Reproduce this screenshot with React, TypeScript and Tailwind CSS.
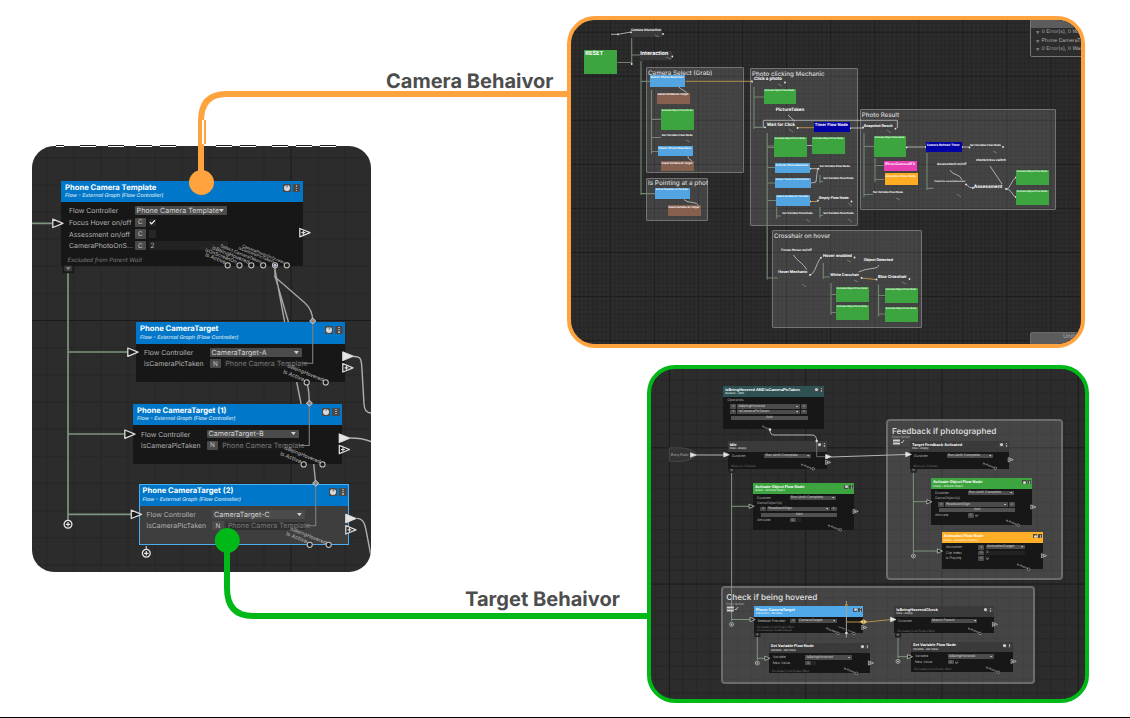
import type { ReactNode } from 'react';
import clsx from 'clsx';
import { Check } from 'lucide-react';

const ctx = document.createElement('canvas').getContext('2d')!;

// Font size at which `text` is exactly `width` wide.
function fitSize(text: string, width: number, weight: number) {
  ctx.font = `${weight} 100px Inter`;
  return (width / ctx.measureText(text).width) * 100;
}

type LabelProps = {
  x: number;
  cy: number;
  w: number;
  text: string;
  weight?: number;
  className?: string;
  angle?: number;
};

function Label({ x, cy, w, text, weight = 700, className = 'text-white', angle = 0 }: LabelProps) {
  return (
    <span
      className={clsx('absolute h-0 origin-left whitespace-nowrap leading-none', className)}
      style={{
        left: x,
        top: cy,
        lineHeight: 0,
        fontWeight: weight,
        fontSize: fitSize(text, w, weight),
        transform: angle ? `rotate(${angle}deg)` : undefined,
      }}
    >
      {text}
    </span>
  );
}

// Slanted caption that ends next to a bottom port.
function PortLabel({ x, y, w, text, className = 'text-[#a8a8a8]' }: { x: number; y: number; w: number; text: string; className?: string }) {
  return <Label x={x - w * 0.927} cy={y - w * 0.375} w={w} text={text} weight={500} angle={22} className={className} />;
}

type CanvasProps = {
  x: number;
  y: number;
  className: string;
  step: number;
  originX: number;
  originY: number;
  every: number;
  minor: string;
  major: string;
  children: ReactNode;
};

// Node canvas: children are placed in board coordinates, (x, y) is its top left corner.
function Canvas({ x, y, className, step, originX, originY, every, minor, major, children }: CanvasProps) {
  const lines = (from: number, size: number, origin: number) => {
    const first = Math.ceil((from - origin) / step);
    const out: { at: number; major: boolean }[] = [];
    for (let i = first; origin + i * step < from + size; i++) {
      out.push({ at: origin + i * step - from, major: i % every === 0 });
    }
    return out;
  };
  return (
    <section className={clsx('relative shrink-0 overflow-hidden bg-[#2c2c2c]', className)}>
      <svg className="absolute inset-0 size-full">
        {lines(x, 520, originX).map((l) => (
          <line key={l.at} x1={l.at} x2={l.at} y1={0} y2={430} stroke={l.major ? major : minor} />
        ))}
        {lines(y, 430, originY).map((l) => (
          <line key={l.at} y1={l.at} y2={l.at} x1={0} x2={520} stroke={l.major ? major : minor} />
        ))}
      </svg>
      <div className="absolute h-[718px] w-[1130px]" style={{ left: -x, top: -y }}>
        {children}
      </div>
    </section>
  );
}

function Wires({ children }: { children: ReactNode }) {
  return (
    <svg className="absolute inset-0" width="1130" height="718" fill="none">
      {children}
    </svg>
  );
}

type PortProps = { x: number; y: number; s?: number; kind?: 'in' | 'out' | 'plus' };

function Port({ x, y, s = 1, kind = 'in' }: PortProps) {
  return (
    <g transform={`translate(${x} ${y}) scale(${s})`}>
      <path
        d="M.8 -4.2 L11 0 L.8 4.2 Z"
        fill={kind === 'out' ? '#e6e6e6' : '#1c1c1c'}
        stroke="#dcdcdc"
        strokeWidth="1.3"
        strokeLinejoin="round"
      />
      {kind === 'plus' && <path d="M2.4 0H6.4M4.4 -2V2" stroke="#dcdcdc" strokeWidth="1.2" />}
    </g>
  );
}

function Ring({ x, y, r = 2.6 }: { x: number; y: number; r?: number }) {
  return <circle cx={x} cy={y} r={r} fill="#1c1c1c" stroke="#c4c4c4" strokeWidth={r * 0.4} />;
}

function AddPort({ x, y, s = 1 }: { x: number; y: number; s?: number }) {
  return (
    <g transform={`translate(${x} ${y}) scale(${s})`} stroke="#e6e6e6">
      <circle r="3.9" fill="#222" strokeWidth="1.3" />
      <path d="M-2.2 0H2.2M0 -2.2V2.2" strokeWidth="1.2" />
    </g>
  );
}

function Diamond({ x, y }: { x: number; y: number }) {
  return <path d={`M${x - 3} ${y}l3 -3l3 3l-3 3z`} fill="#8a8a8a" stroke="#d0d0d0" />;
}

function Tab({ x, y, s = 1 }: { x: number; y: number; s?: number }) {
  return (
    <g transform={`translate(${x} ${y}) scale(${s})`}>
      <rect x="-6" y="-4" width="12" height="8" rx="1" fill="#1a1a1a" />
      <rect x="-4" y="-3.6" width="8" height="5.6" fill="#3a3a3a" />
      <path d="M-2.4 -2.4H2.4L0 1.2Z" fill="#808080" />
    </g>
  );
}

type Row =
  | { kind: 'select'; label: string; tag?: string; value: string }
  | { kind: 'check'; label: string; on: boolean }
  | { kind: 'value'; label: string; tag: string; value: string; dim?: boolean }
  | { kind: 'item'; value: string }
  | { kind: 'text'; label: string }
  | { kind: 'add' };

function Tag({ children }: { children: string }) {
  return (
    <span className="flex h-[1.15em] w-[1.45em] shrink-0 items-center justify-center rounded-[0.1em] bg-[#4b4b4b] text-[#c8c8c8]">
      <span className="text-[0.8em]">{children}</span>
    </span>
  );
}

function Dropdown({ value, className }: { value: string; className: string }) {
  return (
    <span className={clsx('flex h-[1.1em] items-center justify-between rounded-[0.1em] bg-[#4b4b4b] pr-[0.4em] pl-[0.25em] text-[#d4d4d4]', className)}>
      <span className="text-[0.89em] leading-none">{value}</span>
      <svg viewBox="0 0 6 4" className="w-[0.6em] shrink-0">
        <path d="M0 0h6L3 4z" fill="#d0d0d0" />
      </svg>
    </span>
  );
}

function RowView({ row }: { row: Row }) {
  if (row.kind === 'add') {
    return (
      <div className="ml-[0.9em] flex h-[1em] w-[19.2em] items-center justify-center bg-[#505050] text-[#cfcfcf]">
        <span className="text-[0.85em]">Add</span>
      </div>
    );
  }
  if (row.kind === 'item') {
    return (
      <div className="ml-[0.8em] flex items-center gap-[0.3em]">
        <Tag>V</Tag>
        <Dropdown value={row.value} className="w-[15.6em]" />
        <Tag>X</Tag>
      </div>
    );
  }
  if (row.kind === 'text') return <span className="text-[0.88em]">{row.label}</span>;
  return (
    <>
      <span className="w-[8.2em] shrink-0 text-[#b4b4b4]">
        <span className="text-[0.86em]">{row.label}</span>
      </span>
      {row.kind === 'select' && (
        <>
          {row.tag && (
            <span className="mr-[0.4em]">
              <Tag>{row.tag}</Tag>
            </span>
          )}
          <Dropdown value={row.value} className={row.tag ? 'w-[9.8em]' : 'w-[11.6em]'} />
        </>
      )}
      {row.kind === 'check' && (
        <>
          <Tag>C</Tag>
          <span className="ml-[0.3em] flex size-[0.95em] items-center justify-center rounded-[0.1em] bg-[#262626]">
            {row.on && <Check className="size-[0.85em] text-white" strokeWidth={4} />}
          </span>
        </>
      )}
      {row.kind === 'value' && (
        <>
          <Tag>{row.tag}</Tag>
          <span className={clsx('ml-[0.3em] flex h-[1.1em] w-[9.9em] items-center pl-[0.2em]', row.dim ? 'bg-[#202020]/50 text-[#767676]' : 'bg-[#222] text-[#b4b4b4]')}>
            <span className="whitespace-nowrap text-[0.89em]">{row.value}</span>
          </span>
        </>
      )}
    </>
  );
}

type NodeProps = {
  x: number;
  y: number;
  w: number;
  h: number;
  title: string;
  sub: string;
  header: string;
  rows: Row[];
  footer?: string;
  small?: boolean;
  selected?: boolean;
};

function FlowNode({ x, y, w, h, title, sub, header, rows, footer, small, selected }: NodeProps) {
  return (
    <div
      className={clsx(
        'absolute flex flex-col leading-none',
        small ? 'text-[4px]' : 'text-[8px]',
        selected ? 'bg-[#3e3e3e] outline-[1.5px] outline-[#4aaef0] -outline-offset-1' : 'bg-[#171717]',
      )}
      style={{ left: x, top: y, width: w, height: h }}
    >
      <header className={clsx('flex h-[2.7em] shrink-0 items-start justify-between pt-[0.42em] pr-[0.3em] pl-[0.5em]', header)}>
        <div className="flex flex-col whitespace-nowrap text-white">
          <span className="h-[1.2em] text-[0.96em] leading-[1.15em] font-bold">{title}</span>
          <span className="text-[0.66em] leading-[1.3em] font-medium text-white/80 italic">{sub}</span>
        </div>
        <div className="flex gap-[0.25em] pt-[0.05em]">
          <span className="flex h-[1em] w-[1.05em] items-center justify-center rounded-[0.1em] bg-[#4a4a4a]">
            <span className="flex size-[0.75em] items-center justify-center rounded-full bg-[#dadada]">
              <span className="text-[0.55em] font-bold text-[#444]">?</span>
            </span>
          </span>
          <span className="flex h-[1em] w-[0.9em] flex-col items-center justify-center gap-[0.1em] rounded-[0.1em] bg-[#4a4a4a]">
            <i className="size-[0.17em] bg-[#a8a8a8]" />
            <i className="size-[0.17em] bg-[#a8a8a8]" />
            <i className="size-[0.17em] bg-[#a8a8a8]" />
          </span>
        </div>
      </header>
      <div className="flex flex-col pt-[0.35em] pl-[1em]">
        {rows.map((row, i) => (
          <div key={i} className={clsx('flex items-center whitespace-nowrap text-[#a8a8a8]', small ? 'h-[1.39em]' : 'h-[1.46em]')}>
            <RowView row={row} />
          </div>
        ))}
      </div>
      {footer && (
        <div className="mt-auto pb-[0.2em] pl-[0.8em] text-[#7a7a7a]">
          <p className="text-[0.74em] leading-[1em] whitespace-pre-line italic">{footer}</p>
        </div>
      )}
    </div>
  );
}

const extSub = 'Flow - External Graph (Flow Controller)';

function targetRows(value: string): Row[] {
  return [
    { kind: 'select', label: 'Flow Controller', value },
    { kind: 'value', label: 'isCameraPicTaken', tag: 'N', value: 'Phone Camera Template', dim: true },
  ];
}

function OverviewCanvas() {
  return (
    <Canvas x={32} y={146} step={27.15} originX={291} originY={320.5} every={10} minor="#272727" major="#1a1a1a" className="mt-[146px] ml-8 h-[426px] w-[339px] rounded-[22px]">
      <FlowNode
        x={61} y={180.5} w={241.5} h={85}
        title="Phone Camera Template" sub={extSub} header="bg-[#0077c8]"
        footer="Excluded from Parent Wait"
        rows={[
          { kind: 'select', label: 'Flow Controller', value: 'Phone Camera Template' },
          { kind: 'check', label: 'Focus Hover on/off', on: true },
          { kind: 'check', label: 'Assessment on/off', on: false },
          { kind: 'value', label: 'CameraPhotoOnS...', tag: 'C', value: '2' },
        ]}
      />
      <Wires>
        <g stroke="#a6a6a6" strokeWidth="1.4">
          <path d="M275 267V277L305 303Q312.7 310 312.7 321" />
          <path d="M275 270L285 324M275 276L289 324M296.7 382L301.3 405M306.7 382Q309.3 390 309.3 404M313.7 464L315.7 484" />
        </g>
      </Wires>
      <FlowNode x={136} y={322} w={209} h={60.3} title="Phone CameraTarget" sub={extSub} header="bg-[#0077c8]" rows={targetRows('CameraTarget-A')} />
      <FlowNode x={133} y={403.8} w={209} h={60.3} title="Phone CameraTarget (1)" sub={extSub} header="bg-[#0077c8]" rows={targetRows('CameraTarget-B')} />
      <FlowNode x={138.5} y={484} w={210.5} h={61.3} title="Phone CameraTarget (2)" sub={extSub} header="bg-[#0077c8]" rows={targetRows('CameraTarget-C')} selected />
      <PortLabel x={225} y={263} w={22} text="Is Active" />
      <PortLabel x={237} y={263} w={34} text="isOnScreenOn" />
      <PortLabel x={249} y={263} w={40} text="isBeingHovered" />
      <PortLabel x={261} y={263} w={44} text="Select CameraTaken" />
      <PortLabel x={273} y={263} w={38} text="isCameraPicTaken" />
      <PortLabel x={285} y={263.5} w={46} text="CameraPhotoOnScreen" />
      {[[0, 0], [-3, 82], [3, 162.4]].map(([dx, dy]) => (
        <div key={dy}>
          <PortLabel x={304 + dx} y={380.5 + dy} w={22.5} text="Is Active" />
          <PortLabel x={323 + dx} y={381 + dy} w={39} text="isBeingHovered" />
        </div>
      ))}
      <Wires>
        <g stroke="#7d957d" strokeWidth="1.7">
          <path d="M68 273V520M68 352H128M68 434H125M68 514.3H131M32 223.3H53" />
        </g>
        <g stroke="#808080" strokeWidth="1.1">
          <path d="M312.7 321V363.3H302.5M309.3 403V445.5H299M315.7 483V525.8H305.5" />
        </g>
        <g stroke="#b0b0b0" strokeWidth="1.4">
          <path d="M353 356.6C361 356 361.5 359 362 370L364 404Q364.5 413 371 413M350 438Q362 438 371 441.5M357 518.4Q364 518 366 530L371 556M146.3 546V550" />
        </g>
        <Tab x={68.3} y={269.3} />
        <Port x={52} y={223.3} />
        <Port x={127} y={352.2} />
        <Port x={124} y={434.2} />
        <Port x={130.5} y={514.3} />
        <Port x={299} y={232.7} kind="plus" />
        <Port x={342} y={356.2} kind="out" />
        <Port x={342} y={367.8} kind="plus" />
        <Port x={338.5} y={438.2} kind="out" />
        <Port x={338.5} y={449.5} kind="plus" />
        <Port x={345} y={518.5} kind="out" />
        <Port x={345} y={529.8} kind="plus" />
        {[227.7, 239.5, 251.3, 263.2, 275, 286.8].map((x) => (
          <Ring key={x} x={x} y={265.3} />
        ))}
        <circle cx="275" cy="265.3" r="1.6" fill="#c9c4dc" />
        <Ring x={306.7} y={382.4} />
        <Ring x={325.7} y={382.4} />
        <Ring x={303.7} y={464.4} />
        <Ring x={322.5} y={464.4} />
        <Ring x={309.7} y={544.8} />
        <Ring x={328.7} y={544.8} />
        <Diamond x={312.7} y={321} />
        <Diamond x={309.4} y={403.2} />
        <Diamond x={315.7} y={483.2} />
        <AddPort x={68} y={524.3} />
        <AddPort x={146.3} y={553.3} />
      </Wires>
    </Canvas>
  );
}

function Group({ x, y, w, h, className }: { x: number; y: number; w: number; h: number; className: string }) {
  return <div className={clsx('absolute bg-white/12', className)} style={{ left: x, top: y, width: w, height: h }} />;
}

const GREEN = 'bg-[#3da53f]';
const BLUE = 'bg-[#52a5e0]';
const BROWN = 'bg-[#85604f]';
const NAVY = 'bg-[#0000a4]';

// x, y, width, height, colour, caption
const blocks: [number, number, number, number, string, string][] = [
  [584.3, 50, 33, 24.3, GREEN, ''],
  [649.7, 74.7, 35.7, 12.5, BLUE, 'Select: Phone BaseItem'],
  [657, 93, 33, 11, BROWN, 'Reset Variable on Target'],
  [661, 109.3, 33.3, 20.7, GREEN, 'Activate Object Flow Node'],
  [657.7, 146, 35.3, 10, BLUE, 'Hover: Phone BaseItem'],
  [661, 160.7, 33.3, 10.5, BROWN, 'Reset Variable on Target'],
  [655, 188, 34.7, 11, BLUE, 'Active Crosshair on The Side'],
  [667.7, 205.3, 33.3, 10.7, BROWN, 'Reset Variable on Target'],
  [763.7, 89, 32.3, 15, GREEN, 'Activate Object Flow Node'],
  [774, 136.7, 33, 20.7, GREEN, 'Activate Object Flow Node'],
  [812, 136.7, 33, 17.5, GREEN, 'Activate Object Flow Node'],
  [774.7, 163, 35.3, 10, BLUE, 'Activate: Phone BaseItem'],
  [775.3, 178, 35.3, 10, BLUE, 'Hover: Touch to Click Photo'],
  [776, 195.3, 34, 10.7, BLUE, 'Select Variable for The Side'],
  [814, 122, 35.7, 10, NAVY, 'Timer Flow Node'],
  [874, 136, 32.3, 21, GREEN, 'Activate Object Flow Node'],
  [884, 161, 33, 9.7, 'bg-[#e83fb4]', 'iPhoneCameraSFX'],
  [884.7, 173.3, 33, 11.7, 'bg-[#ffac22]', 'Animation Flow Node'],
  [926, 142, 35.7, 10, NAVY, 'Camera Refresh Timer'],
  [1016, 170, 33, 15, GREEN, 'Activate Object Flow Node'],
  [1016, 190, 33, 15, GREEN, 'Activate Object Flow Node'],
  [836, 287.3, 33, 14.8, GREEN, 'Activate Object Flow Node'],
  [836, 305.3, 33, 14.8, GREEN, 'Activate Object Flow Node'],
  [885, 288, 33, 15, GREEN, 'Activate Object Flow Node'],
  [885, 307, 33, 15, GREEN, 'Activate Object Flow Node'],
];

// x, vertical centre, width, caption
const captions: [number, number, number, string][] = [
  [585.3, 53.7, 18, 'RESET'],
  [631, 30.3, 30, 'Camera Interaction'],
  [640.3, 54, 28, 'Interaction'],
  [661.7, 134.5, 31, 'Set Variable Flow Node'],
  [754, 80.2, 28, 'Click a photo'],
  [775.7, 111.2, 28.7, 'PictureTaken'],
  [766.7, 126, 28.5, 'Wait for Click'],
  [819.5, 165.8, 30.5, 'Set Variable Flow Node'],
  [823.3, 178.3, 30.5, 'Set Variable Flow Node'],
  [819, 198, 29.7, 'Empty Flow Node'],
  [782.3, 213.3, 30.5, 'Set Variable Flow Node'],
  [823.3, 213.2, 30.5, 'Set Variable Flow Node'],
  [863.7, 125.5, 29, 'Snapshot Result'],
  [873, 192, 30, 'Set Variable Flow Node'],
  [970, 145, 31, 'Set Variable Flow Node'],
  [937, 164.3, 29.7, 'Assessment on/off'],
  [976, 160.4, 30, 'check/cross switch'],
  [934.3, 181.7, 31, 'Check for correct/incorrect'],
  [973.7, 187, 28.7, 'Assessment'],
  [781.3, 250, 30.7, 'Focus Hover on/off'],
  [778.3, 272.4, 29.3, 'Hover Mechanic'],
  [823, 256, 29, 'Hover enabled'],
  [863.7, 259.6, 29.3, 'Object Detected'],
  [830.3, 275.4, 28.8, 'White Crosshair'],
  [878, 277.2, 28.8, 'Blue Crosshair'],
];

function CameraCanvas() {
  return (
    <Canvas x={571} y={20} step={4.405} originX={610.4} originY={32.2} every={10} minor="#272727" major="#1c1c1c" className="h-[332px] w-[518px] rounded-[28px] border-4 border-[#ffa33f]">
      <Group x={646} y={67.3} w={97.7} h={105.3} className="rounded-[1px] border border-[#747474]" />
      <Group x={645.7} y={177.5} w={62.7} h={43.8} className="rounded-[1px] border border-[#747474]" />
      <Group x={750.3} y={68.3} w={107.4} h={157.5} className="rounded-[1px] border border-[#747474]" />
      <Group x={859.7} y={109} w={196} h={101} className="rounded-[1px] border border-[#747474]" />
      <Group x={772} y={230} w={149.7} h={97.7} className="rounded-[1px] border border-[#747474]" />
      <div className="absolute top-[28px] left-[631px] h-[9px] w-[31px] bg-[#3a3a3a]" />
      <div className="absolute top-[51px] left-[640px] h-[9px] w-[32px] bg-[#3a3a3a]" />
      <Wires>
        <g stroke="#71846f" strokeWidth="1.2">
          <path d="M631.7 38V64M617.5 62.5H632M632 55H640M641 61V195M641 81.3H650M641 193.7H655" />
          <path d="M651.5 90V154M651.5 119.3H661M651.5 137.5H661M651.5 151.5H658" />
          <path d="M754 87V129M754 97H764M754 127.3H765M767.2 133V279.5M767.2 146H774M767.2 147.5H774M767.2 167.5H775M767.2 183H775M767.2 200.5H776M767.2 278H778" />
          <path d="M776.7 207V218.5M776.7 216H781M820 175V183M820 181.5H823M820 207V218M820 215.5H823" />
          <path d="M864 133V197M864 146.5H874M864 194.5H873M875 158V182M875 165.5H884M875 179.5H884" />
          <path d="M927 153V190M927 188.3H933.5M823.3 263V279M823.3 277H830M831 283V315M831 294.5H836M831 312.5H836M878.5 284.5V316.5M878.5 295.5H885M878.5 314H885" />
        </g>
        <g stroke="#c9c9c9" strokeWidth="0.8">
          <path d="M611 34.3H618L631 32M679 87Q680 89 683 90T687 94M688 156Q688 159 690 159.5T692 162M684 199.5Q686 202 692 202.5T698 205" />
          <path d="M763.3 127V120.3H897.3V128M788 115L795 121.5M807 145.5H812M849.7 128H863.5M906.5 147H926M961.7 147H970M810 168.7H819M811 183L816 182L817.5 169" />
          <path d="M950 170Q951 173 956 174.5T962 180M990 166L1002 184M966 184Q969 188 973 188M1006 189Q1009 189 1011 184T1016 177.5M1006 189Q1010 189 1012 193T1016 197" />
          <path d="M793.5 255Q796 259 800 262T806.7 269.5M810 274.5Q813 275 816 267T821 258M878.5 265Q879 268 872 268.5T858.5 272" />
        </g>
        <g stroke="#b0904c" strokeWidth="1">
          <path d="M685.5 81.3H752M797 127.7H814M810 201.5H818M861 278L876 279.5" />
        </g>
        <g stroke="#9a9a9a" strokeWidth="0.6">
          <path d="M655 35L659 37M666 57L671 59M609 72L613 74M686 127L690 129M686 140L690 142M778 84L782 86M786 101L790 103M789 129L793 132M829 152L833 154M887 130L891 133M897 155L901 157M993 151L997 153M957 194L961 197M896 198L900 200M1042 183L1046 185M1042 202L1046 204M802 284L806 287M847 260L851 262M854 280L858 282M902 282L906 284M860 318L864 320M908 320L912 322M806 219L810 222M848 219L852 222M848 203L852 206" />
        </g>
        <g fill="#e8e8e8">
          {[[618, 34.3], [631, 32.3], [663, 34], [672.3, 56.5], [752, 81.5], [785, 82.5], [765, 127.3], [797.5, 128], [850, 128.3], [863, 127.5], [895.5, 128.7], [961.8, 147], [969.5, 147.5], [1003, 147], [966, 184.5], [973, 188], [1006, 189], [1016, 177.5], [1016, 197], [906.7, 147.3], [926, 147], [810, 275], [821, 257.7], [854.5, 257.5], [861.5, 278], [876.5, 279.5], [909.5, 279], [818.5, 168.7], [810, 168.7], [818, 200.5], [810, 201.5], [851.5, 201.5], [631.7, 64]].map(([x, y]) => (
            <circle key={`${x}-${y}`} cx={x} cy={y} r="0.9" />
          ))}
        </g>
      </Wires>
      {blocks.map(([x, y, w, h, color]) => (
        <div key={`${x}-${y}`} className={clsx('absolute', color)} style={{ left: x, top: y, width: w, height: h }} />
      ))}
      {blocks.map(([x, y, w, , , text]) => text && <Label key={`${x}-${y}`} x={x + 0.8} cy={y + (text.length < 21 ? 2.8 : 2)} w={w - 2.5} text={text} />)}
      {captions.map(([x, cy, w, text]) => (
        <Label key={`${x}-${cy}`} x={x} cy={cy} w={w} text={text} />
      ))}
      <Label x={648} cy={73} w={64.5} text="Camera Select (Grab)" weight={500} className="text-[#d8d8d8]" />
      <div className="absolute top-[177px] left-[647px] h-3 w-[61px] overflow-hidden">
        <Label x={1} cy={6} w={64} text="Is Pointing at a photo" weight={500} className="text-[#d8d8d8]" />
      </div>
      <Label x={752} cy={74.3} w={72.7} text="Photo clicking Mechanic" weight={500} className="text-[#d8d8d8]" />
      <Label x={861.7} cy={114.7} w={37.5} text="Photo Result" weight={500} className="text-[#d8d8d8]" />
      <Label x={774} cy={235.9} w={56.3} text="Crosshair on hover" weight={500} className="text-[#d8d8d8]" />
      <div className="absolute top-[12px] left-[1030px] flex h-[45px] w-[70px] flex-col rounded-[2px] border border-[#757575] bg-[#2d2d2d]">
        <div className="h-[15px] shrink-0 bg-[#5c5c5c]" />
        <div className="flex flex-col pt-[1px] pl-[5px] text-[5.2px] text-[#b4b4b4]">
          {['0 Error(s), 0 Warning(s)', 'Phone CameraTarget', '0 Error(s), 0 Warning(s)'].map((text, i) => (
            <div key={i} className="flex h-[8.3px] items-center gap-[2px] whitespace-nowrap">
              <svg viewBox="0 0 4 4" className="size-[3.5px] shrink-0">
                <path d="M0 0h4L2 4z" fill="#777" />
              </svg>
              {text}
            </div>
          ))}
        </div>
      </div>
      <div className="absolute top-[332px] left-[1030px] h-5 w-[60px] rounded-tl-[2px] border border-[#6c6c6c] bg-[#5c5c5c]" />
      <Label x={1063} cy={337.3} w={15} text="Unity" weight={500} className="text-[#a0a0a0]" />
    </Canvas>
  );
}

function TargetCanvas() {
  const grey = 'bg-[#3a3a3a]';
  const activate = (on: boolean): Row[] => [
    { kind: 'select', label: 'Duration', value: 'Run Until Complete' },
    { kind: 'text', label: 'GameObject(s)' },
    { kind: 'item', value: 'FeedbackSign' },
    { kind: 'add' },
    { kind: 'check', label: 'Activate', on },
  ];
  return (
    <Canvas x={651} y={369} step={13.63} originX={669.4} originY={447.8} every={10} minor="#272727" major="#1b1b1b" className="mt-[17px] h-[338px] w-[442px] self-end rounded-[28px] border-4 border-[#00b818]">
      <Group x={886.3} y={419.3} w={176.4} h={160.4} className="rounded-[4px] border-2 border-[#6c6c6c]" />
      <Group x={720.5} y={586} w={314} h={98} className="rounded-[4px] border-2 border-[#6c6c6c]" />
      <Label x={892} cy={430.5} w={104.5} text="Feedback if photographed" weight={600} className="text-[#d6d6d6]" />
      <Label x={726.3} cy={597} w={91.3} text="Check if being hovered" weight={600} className="text-[#d6d6d6]" />
      <Label x={892} cy={437} w={18} text="Description" weight={400} className="text-[#b0b0b0]" />
      <Label x={726.3} cy={603.8} w={18} text="Description" weight={400} className="text-[#b0b0b0]" />

      <FlowNode
        small x={723.3} y={386} w={101} h={43.3}
        title="IsBeingHovered AND IsCameraPicTaken" sub="Boolean - AND" header="bg-[#2e5254]"
        rows={[{ kind: 'text', label: 'Operands' }, { kind: 'item', value: 'IsBeingHovered' }, { kind: 'item', value: 'IsCameraPicTaken' }, { kind: 'add' }]}
      />
      <FlowNode small x={727.7} y={441} w={99.3} h={28} title="Idle" sub="Flow - Empty" header={grey} rows={[{ kind: 'select', label: 'Duration', value: 'Run Until Complete' }]} footer="Waits for Children" />
      <FlowNode small x={753} y={483} w={101} h={46.7} title="Activate Object Flow Node" sub="Scene - Activate Object" header={GREEN} rows={activate(false)} />
      <FlowNode small x={910} y={441} w={99.3} h={27.5} title="Target Feedback Activated" sub="Flow - Empty" header={grey} rows={[{ kind: 'select', label: 'Duration', value: 'Run Until Complete' }]} footer="Waits for Children" />
      <FlowNode small x={931} y={478.3} w={101.3} h={47} title="Activate Object Flow Node" sub="Scene - Activate Object" header={GREEN} rows={activate(true)} />
      <FlowNode
        small x={941.7} y={532.3} w={101.3} h={36.7}
        title="Animation Flow Node" sub="Scene - Animation (Legacy)" header="bg-[#ffae27]"
        rows={[
          { kind: 'select', label: 'Animation', tag: 'V', value: 'AnimationTarget' },
          { kind: 'value', label: 'Clip Index', tag: 'C', value: '0' },
          { kind: 'check', label: 'Is Playing', on: true },
        ]}
      />
      <FlowNode
        small x={753.7} y={606} w={109.3} h={27.2}
        title="Phone CameraTarget" sub="Interaction - Boolean" header="bg-[#4fa9e8]"
        rows={[{ kind: 'select', label: 'Boolean Provider', tag: 'V', value: 'CameraTarget' }]}
        footer={'Excluded from Parent Wait\nContinuous Value Output'}
      />
      <FlowNode
        small x={768.7} y={642.7} w={101.3} h={30.7}
        title="Set Variable Flow Node" sub="Variable - Set Value" header={grey} footer="Excluded from Parent Wait"
        rows={[{ kind: 'select', label: 'Variable', value: 'isBeingHovered' }, { kind: 'check', label: 'New Value', on: false }]}
      />
      <FlowNode small x={894.3} y={606} w={99.5} h={27.3} title="IsBeingHoveredCheck" sub="Flow - Empty" header={grey} rows={[{ kind: 'select', label: 'Duration', value: 'Match Parent' }]} footer="Excluded from Parent Wait" />
      <FlowNode
        small x={911} y={641.7} w={101.6} h={30.3}
        title="Set Variable Flow Node" sub="Variable - Set Value" header={grey} footer="Excluded from Parent Wait"
        rows={[{ kind: 'select', label: 'Variable', value: 'isBeingHovered' }, { kind: 'check', label: 'New Value', on: true }]}
      />

      <Wires>
        <path d="M669.3 447.8H681Q691 448 697 454.6Q691 461 681 461.3H669.3Z" fill="#333" stroke="#555" strokeWidth="0.7" />
        <g stroke="#7d957d">
          <path d="M731.6 473V621M731.6 506.3H749M731.6 619.5H750M913.4 473V553M913.4 501.7H927M913.4 551H938M757.3 637V660M757.3 658.3H765M898 638V658M898 656.7H908" />
        </g>
        <g stroke="#b4b4b4">
          <path d="M770 430Q770 435 774 435H812Q816.7 435 816.7 441M695 455H724M831 457L906 454.5" />
          <path d="M816.7 441V456.7H825" stroke="#808080" strokeWidth="0.8" />
          <path d="M846.4 601V637.5" stroke="#a0a0a0" />
        </g>
        <path d="M846.4 622H861M867 622L891 619.6" stroke="#b58f42" />
        <circle cx="846.4" cy="605" r="1.3" fill="#b58f42" />
        <circle cx="846.4" cy="633" r="1.3" fill="#ddd" />
        <path d="M859.8 621.8l3.7 -2.4v4.8zM867.4 621.8l-3.7 -2.4v4.8z" fill="#e6cf86" stroke="#b58f42" strokeWidth="0.5" />
        <g fill="#d0d0d0">
          <path d="M893 439.5h7v5h-7zM726.8 606.5h7v5h-7z" />
          <path d="M893 442h7M726.8 609h7" stroke="#444" />
          <path d="M901 442l1 1l2 -3M735 609l1 1l2 -3" stroke="#e0e0e0" strokeWidth="0.8" fill="none" />
        </g>
        <Port s={0.55} x={690} y={455} kind="out" />
        <Port s={0.55} x={723.3} y={454.7} kind="out" />
        <Port s={0.55} x={825.2} y={456.7} kind="out" />
        <Port s={0.5} x={825.2} y={462.4} kind="plus" />
        <Port s={0.55} x={905.3} y={454.4} kind="out" />
        <Port s={0.5} x={748.7} y={506.3} />
        <Port s={0.5} x={749.7} y={619.5} />
        <Port s={0.5} x={852.7} y={511.4} kind="plus" />
        <Port s={0.5} x={1007.8} y={459.7} kind="plus" />
        <Port s={0.5} x={926.4} y={501.8} />
        <Port s={0.5} x={937} y={551} />
        <Port s={0.5} x={1030.4} y={507} kind="plus" />
        <Port s={0.5} x={1041} y={555.7} kind="plus" />
        <Port s={0.5} x={764.4} y={658.3} />
        <Port s={0.5} x={861.4} y={627.5} kind="plus" />
        <Port s={0.5} x={868} y={663} kind="plus" />
        <Port s={0.55} x={890} y={619.5} kind="out" />
        <Port s={0.5} x={992} y={624.4} kind="plus" />
        <Port s={0.5} x={907} y={656.7} />
        <Port s={0.5} x={1010.7} y={661.4} kind="plus" />
        <Tab s={0.5} x={731.7} y={470.6} />
        <Tab s={0.5} x={913.7} y={470.4} />
        <Tab s={0.5} x={757.4} y={634.9} />
        <Tab s={0.5} x={898} y={635.2} />
        <AddPort s={0.5} x={731.6} y={624.4} />
        <AddPort s={0.5} x={913.4} y={556} />
        <AddPort s={0.5} x={757.3} y={663} />
        <AddPort s={0.5} x={898} y={661.4} />
        <circle cx="770" cy="429.5" r="1.3" fill="#ddd" />
        <circle cx="816.7" cy="441" r="1.2" fill="#ddd" />
        {[[813.3, 468.8], [840.3, 529.7], [995.3, 468.3], [1018.3, 525.2], [1028.7, 569.2], [838, 633.4], [854, 633.4], [856.3, 673.4], [980, 633.4], [998.3, 672.2]].map(([x, y]) => (
          <Ring key={`${x}-${y}`} x={x} y={y} r={1.3} />
        ))}
      </Wires>
      <Label x={671} cy={454.8} w={17.5} text="Entry Point" weight={500} className="text-[#b0b0b0]" />
      <PortLabel x={769} y={428.5} w={8} text="Result" />
      {[[813.3, 468.8], [840.3, 529.7], [995.3, 468.3], [1018.3, 525.2], [1028.7, 569.2], [838, 633.4], [856.3, 673.4], [980, 633.4], [998.3, 672.2]].map(([x, y]) => (
        <PortLabel key={`${x}-${y}`} x={x - 1.5} y={y - 0.8} w={11.5} text={x === 838 ? 'Provider' : 'Is Active'} className="text-[#c4c4c4]" />
      ))}
      <PortLabel x={852.5} y={632.6} w={16} text="Camera Is Active" className="text-[#c4c4c4]" />
    </Canvas>
  );
}

const dashes = [[56, 8], [80, 16], [108, 16], [136, 16], [160, 16], [216, 16], [240, 16], [272, 16], [296, 16], [320, 16]];

export default function App() {
  return (
    <main className="relative flex h-[718px] w-[1130px] items-start overflow-hidden border-b border-black bg-white font-[Inter,sans-serif] [text-rendering:geometricPrecision]">
      <OverviewCanvas />
      <div className="mt-4 ml-[196px] flex w-[522px] flex-col">
        <CameraCanvas />
        <TargetCanvas />
      </div>
      <Wires>
        {dashes.map(([x, w]) => (
          <g key={x}>
            <rect x={x} y="145" width={w} height="1" fill="#1c1c1c" />
            <rect x={x} y="146" width={w} height="1" fill="#fff" />
          </g>
        ))}
        <path d="M568 94H226Q201 94 201 121V182" stroke="#ffa33f" strokeWidth="6" />
        <rect x="202" y="120" width="2" height="24" fill="#fff" />
        <rect x="204" y="120" width="2" height="24" fill="#ffa33f" />
        <circle cx="201.5" cy="182.5" r="12.5" fill="#ffa33f" />
        <path d="M227 540V588Q227 616 253 616H648" stroke="#00b818" strokeWidth="6" />
        <circle cx="227.3" cy="540.5" r="12.5" fill="#00b818" />
      </Wires>
      <Label x={386} cy={80.5} w={167.5} text="Camera Behaivor" weight={700} className="text-[#4d4d4d]" />
      <Label x={465} cy={598.5} w={155} text="Target Behaivor" weight={700} className="text-[#4d4d4d]" />
    </main>
  );
}
